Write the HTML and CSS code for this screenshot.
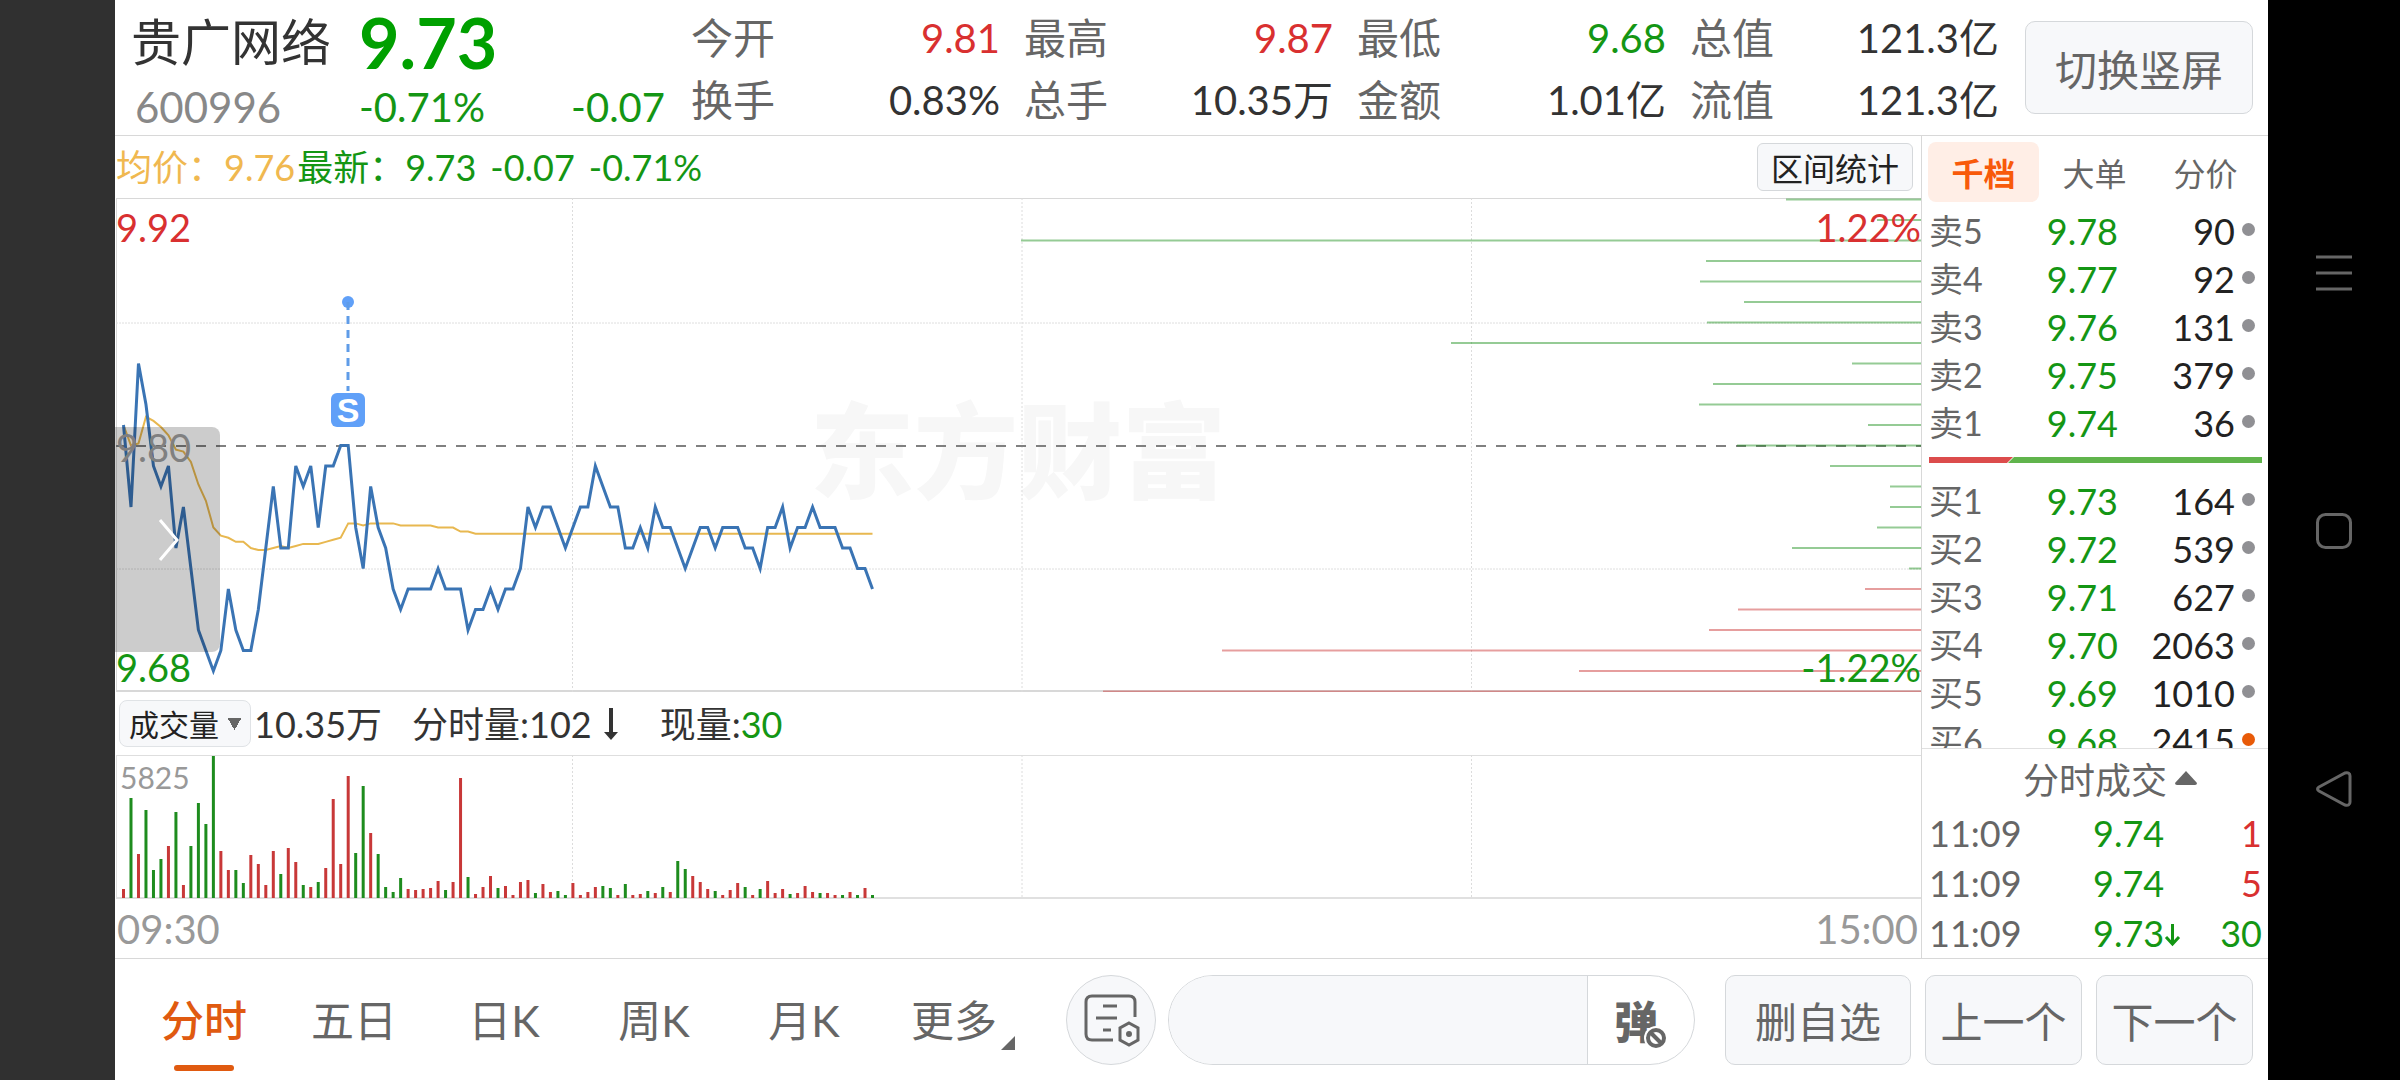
FILE: index.html
```html
<!DOCTYPE html>
<html lang="zh-CN">
<head>
    <meta charset="UTF-8">
    <meta name="viewport" content="width=device-width, initial-scale=1.0">
    <title>贵广网络 600996</title>
    <link rel="stylesheet" href="styles.css">
</head>
<body>
    <div class="device">
        <div class="notch"></div>
        <div class="screen">
            <header class="header">
                <div class="quote">
                    <h1 class="name">贵广网络</h1>
                    <div class="price down">9.73</div>
                    <div class="code">600996</div>
                    <div class="change down"><span>-0.71%</span><span>-0.07</span></div>
                </div>
                <dl class="stats">
                    <div><dt>今开</dt><dd class="up">9.81</dd></div>
                    <div><dt>最高</dt><dd class="up">9.87</dd></div>
                    <div><dt>最低</dt><dd class="down">9.68</dd></div>
                    <div><dt>总值</dt><dd>121.3亿</dd></div>
                    <div><dt>换手</dt><dd>0.83%</dd></div>
                    <div><dt>总手</dt><dd>10.35万</dd></div>
                    <div><dt>金额</dt><dd>1.01亿</dd></div>
                    <div><dt>流值</dt><dd>121.3亿</dd></div>
                </dl>
                <button class="btn rotate-btn">切换竖屏</button>
            </header>

            <main class="content">
                <section class="charts">
                    <div class="info-bar">
                        <span class="avg">均价：9.76</span>
                        <span class="down">最新：9.73</span>
                        <span class="down val">-0.07</span>
                        <span class="down val">-0.71%</span>
                        <button class="btn range-btn">区间统计</button>
                    </div>
                    <div class="price-chart">
                        <div class="watermark">东方财富</div>
                        <svg id="price-svg" viewBox="0 0 1805 494" preserveAspectRatio="none"></svg>
                        <button class="drawer" aria-label="展开">
                            <svg width="22" height="44" viewBox="0 0 22 44"><path d="M2 2 L19 22 L2 42" fill="none" stroke="#fff" stroke-width="3"/></svg>
                        </button>
                        <span class="label top-left up">9.92</span>
                        <span class="label mid-left">9.80</span>
                        <span class="label bottom-left down">9.68</span>
                        <span class="label top-right up">1.22%</span>
                        <span class="label bottom-right down">-1.22%</span>
                        <div class="trade-mark">
                            <svg width="14" height="98" viewBox="0 0 14 98">
                                <circle cx="7" cy="7" r="6" fill="#60a0f8"/>
                                <path d="M7 7 V96" stroke="#5f9ce8" stroke-width="3" stroke-dasharray="8 6"/>
                            </svg>
                            <span>S</span>
                        </div>
                    </div>
                    <div class="volume-bar">
                        <select class="indicator" aria-label="指标">
                            <option>成交量</option>
                        </select>
                        <span class="total">10.35万</span>
                        <span class="minute">分时量:102<svg width="14" height="34" viewBox="0 0 14 34"><path d="M5 1h4v24h5l-7 8-7-8h5z" fill="#333"/></svg></span>
                        <span>现量:<span class="down">30</span></span>
                    </div>
                    <div class="volume-chart">
                        <svg id="volume-svg" viewBox="0 0 1805 144" preserveAspectRatio="none"></svg>
                        <span class="max">5825</span>
                    </div>
                    <div class="time-axis"><span>09:30</span><span>15:00</span></div>
                </section>

                <aside class="side">
                    <div class="side-tabs">
                        <button class="active">千档</button>
                        <button>大单</button>
                        <button>分价</button>
                    </div>
                    <div class="book">
                        <table class="orders" id="sell-orders"></table>
                        <div class="ratio">
                            <svg viewBox="0 0 333 6" preserveAspectRatio="none"><path d="M0 0H84L78 6H0z" fill="#dc4c4c"/><path d="M85 0H333V6H79z" fill="#60b44c"/></svg>
                        </div>
                        <table class="orders" id="buy-orders"></table>
                    </div>
                    <button class="deals-title">分时成交<svg width="22" height="14" viewBox="0 0 22 14"><path d="M11 0 L22 12 Q22 14 20 14 H2 Q0 14 0 12 Z" fill="#666"/></svg></button>
                    <table class="deals">
                        <tr><td>11:09</td><td class="down">9.74</td><td class="up">1</td></tr>
                        <tr><td>11:09</td><td class="down">9.74</td><td class="up">5</td></tr>
                        <tr><td>11:09</td><td class="down">9.73<svg width="17" height="24" viewBox="0 0 17 24"><path d="M8.500 1V21M2 14l6.500 7 6.500-7" fill="none" stroke="#149614" stroke-width="3"/></svg></td><td class="down">30</td></tr>
                    </table>
                </aside>
            </main>

            <footer class="toolbar">
                <nav class="periods">
                    <button class="active">分时</button>
                    <button>五日</button>
                    <button>日K</button>
                    <button>周K</button>
                    <button>月K</button>
                    <button class="more">更多</button>
                </nav>
                <button class="note-btn" aria-label="笔记">
                    <svg width="56" height="54" viewBox="0 0 56 54" fill="none" stroke="#666" stroke-width="3">
                        <path d="M51 24V9Q51 3 45 3H8Q2 3 2 9V41Q2 47 8 47H29"/>
                        <path d="M19 13H33M12 25H33M19 37H27"/>
                        <path d="M45 30L54 35V47L45 52L36 47V35Z"/>
                        <circle cx="45" cy="41" r="2" fill="#666" stroke-width="2"/>
                    </svg>
                </button>
                <div class="danmu">
                    <input type="text" aria-label="弹幕">
                    <button aria-label="弹幕开关">
                        <span class="danmu-icon">弹<svg width="24" height="24" viewBox="0 0 24 24"><circle cx="12" cy="12" r="12" fill="#fff"/><circle cx="12" cy="12" r="8" fill="#fff" stroke="#666" stroke-width="4"/><path d="M6 6L18 18" stroke="#666" stroke-width="4"/></svg></span>
                    </button>
                </div>
                <div class="actions">
                    <button class="btn wide">删自选</button>
                    <button class="btn">上一个</button>
                    <button class="btn">下一个</button>
                </div>
            </footer>
        </div>
        <div class="sysnav">
            <button aria-label="菜单"><svg width="36" height="36" viewBox="0 0 36 36"><path d="M0 2H36M0 18H36M0 34H36" stroke="#666" stroke-width="3"/></svg></button>
            <button aria-label="主页"><svg width="36" height="36" viewBox="0 0 36 36"><rect x="1.500" y="1.500" width="33" height="33" rx="8" fill="none" stroke="#666" stroke-width="3"/></svg></button>
            <button aria-label="返回"><svg width="36" height="36" viewBox="0 0 36 36"><path d="M3 16L29 2Q34 1 34 5V31Q34 35 29 34L3 20Q0 18 3 16Z" fill="none" stroke="#666" stroke-width="3"/></svg></button>
        </div>
    </div>
    <script src="script.js"></script>
</body>
</html>
```
FILE: styles.css
```css
* {
    box-sizing: border-box;
}
body {
    margin: 0;
    font-family: Lato, "Noto Sans CJK SC", sans-serif;
    font-size: 36px;
    color: #333;
    background-color: #000;
}
button, input, select {
    font-family: inherit;
    color: inherit;
    margin: 0;
    padding: 0;
    border: none;
    background: none;
}
table {
    border-collapse: collapse;
    table-layout: fixed;
    width: 100%;
}
td {
    padding: 0;
}
svg {
    display: block;
}
.up {
    color: #d93030;
}
.down {
    color: #149614;
}
.device {
    display: flex;
    height: 100vh;
}
.notch {
    width: 115px;
    background-color: #303030;
}
.screen {
    flex: 1;
    min-width: 0;
    display: flex;
    flex-direction: column;
    background-color: #fff;
}
.btn {
    background-color: #f7f8fa;
    border: 1px solid #d5d8db;
    border-radius: 10px;
    color: #666;
    font-size: 42px;
}

/* header */
.header {
    display: flex;
    height: 136px;
    border-bottom: 1px solid #d8d8d8;
}
.quote {
    display: grid;
    grid-template-columns: 228px 1fr;
    grid-template-rows: 84px 46px;
    align-items: center;
    width: 576px;
    padding: 0 26px 0 16px;
}
.name {
    margin: 0;
    font-size: 50px;
    font-weight: normal;
    line-height: 84px;
}
.price {
    font-size: 70px;
    font-weight: bold;
    line-height: 80px;
    color: #00a000;
}
.code {
    padding-left: 4px;
    font-size: 42px;
    line-height: 46px;
    color: #888;
}
.change {
    display: flex;
    justify-content: space-between;
    font-size: 40px;
    line-height: 46px;
}
.stats {
    flex: 1;
    display: grid;
    grid-template-columns: repeat(4, 1fr);
    grid-auto-rows: 62px;
    column-gap: 24px;
    margin: 0;
    padding-top: 7px;
    font-size: 40px;
    line-height: 62px;
}
.stats div {
    display: flex;
    justify-content: space-between;
}
.stats dt {
    font-size: 42px;
    color: #666;
}
.stats dd {
    margin: 0;
}
.rotate-btn {
    width: 228px;
    height: 93px;
    margin: 21px 15px 0 26px;
}

/* left column: charts */
.content {
    flex: 1;
    min-height: 0;
    display: flex;
    border-bottom: 1px solid #d8d8d8;
}
.charts {
    flex: 1;
    min-width: 0;
    display: flex;
    flex-direction: column;
}
.info-bar {
    display: flex;
    align-items: center;
    height: 62px;
    padding: 0 8px 0 1px;
    line-height: 62px;
}
.info-bar .avg {
    margin-right: 2px;
    color: #f0b850;
}
.info-bar .val {
    margin-left: 14px;
}
.range-btn {
    width: 156px;
    height: 48px;
    margin-left: auto;
    border-radius: 6px;
    font-size: 32px;
    color: #222;
}
.price-chart {
    position: relative;
    flex: 1;
    min-height: 0;
    padding-left: 1px;
}
#price-svg {
    position: relative;
    width: 100%;
    height: 100%;
}
#volume-svg {
    width: 100%;
    height: 100%;
}
.watermark {
    position: absolute;
    inset: 0;
    display: flex;
    align-items: center;
    justify-content: center;
    font-size: 104px;
    font-weight: 900;
    color: #f7f7f7;
}
.drawer {
    position: absolute;
    left: 0;
    top: 229px;
    width: 105px;
    height: 225px;
    padding-left: 43px;
    border-radius: 0 8px 8px 0;
    background-color: rgba(0, 0, 0, 0.2);
}
.label {
    position: absolute;
    font-size: 38px;
    line-height: 40px;
}
.top-left {
    left: 1px;
    top: 9px;
}
.mid-left {
    left: 1px;
    top: 229px;
    color: #808080;
}
.bottom-left {
    left: 1px;
    bottom: 5px;
}
.top-right {
    right: 0;
    top: 9px;
}
.bottom-right {
    right: 0;
    bottom: 5px;
}
.trade-mark {
    position: absolute;
    left: 216px;
    top: 97px;
    display: flex;
    flex-direction: column;
    align-items: center;
}
.trade-mark span {
    width: 34px;
    height: 34px;
    border-radius: 6px;
    background-color: #60a0f8;
    color: #fff;
    font-family: "Liberation Sans", sans-serif;
    font-size: 34px;
    font-weight: bold;
    line-height: 34px;
    text-align: center;
}
.volume-bar {
    display: flex;
    align-items: center;
    height: 63px;
    padding-left: 4px;
    line-height: 62px;
}
.indicator {
    appearance: none;
    width: 132px;
    height: 47px;
    padding-left: 9px;
    border: 1px solid #e0e3e6;
    border-radius: 8px;
    background: conic-gradient(from -30deg at 50% 100%, #666 60deg, transparent 0) no-repeat 107px 17px / 15px 12px, #f7f8fa;
    font-size: 30px;
    color: #222;
}
.total {
    margin: 0 30px 0 3px;
}
.minute {
    display: flex;
    align-items: center;
    gap: 12px;
    margin-right: 42px;
}
.volume-chart {
    position: relative;
    height: 144px;
    padding-left: 1px;
}
.max {
    position: absolute;
    left: 5px;
    top: 7px;
    font-size: 30px;
    line-height: 30px;
    color: #999;
}
.time-axis {
    display: flex;
    justify-content: space-between;
    height: 59px;
    padding: 0 3px 0 2px;
    font-size: 40px;
    line-height: 60px;
    color: #999;
}

/* right column: order book */
.side {
    display: flex;
    flex-direction: column;
    width: 347px;
    border-left: 1px solid #d8d8d8;
}
.side-tabs {
    display: flex;
    height: 71px;
    padding: 6px 7px 5px 6px;
}
.side-tabs button {
    flex: 1;
    border-radius: 8px;
    font-size: 32px;
    color: #666;
}
.side-tabs .active {
    background-color: #ffeee6;
    color: #f85a0a;
    font-weight: bold;
}
.book {
    flex: 1;
    min-height: 0;
    overflow: hidden;
    padding: 0 6px 0 7px;
}
.orders tr {
    height: 48px;
    line-height: 48px;
}
.orders th {
    width: 80px;
    padding: 0;
    font-size: 34px;
    font-weight: normal;
    text-align: left;
    color: #666;
}
.orders td {
    width: 109px;
    text-align: right;
}
.orders .qty {
    width: 117px;
    color: #222;
}
.orders .flag {
    width: 27px;
    padding: 0 7px 4px 7px;
}
.flag i {
    display: block;
    width: 13px;
    height: 13px;
    border-radius: 50%;
    background-color: #909094;
}
.flag .mine {
    background-color: #e85a08;
}
.ratio {
    padding: 10px 0 14px;
}
.ratio svg {
    width: 100%;
    height: 6px;
}
.deals-title {
    display: flex;
    align-items: center;
    justify-content: center;
    gap: 8px;
    height: 60px;
    padding: 0 0 2px 30px;
    border-top: 1px solid #e0e0e0;
    font-size: 36px;
    color: #666;
}
.deals {
    width: 333px;
    margin: 0 7px;
    color: #666;
}
.deals tr {
    height: 50px;
    line-height: 50px;
}
.deals td:nth-child(1) {
    width: 164px;
}
.deals td:nth-child(3) {
    width: 64px;
    text-align: right;
}
.deals svg {
    display: inline-block;
}

/* bottom toolbar */
.toolbar {
    display: flex;
    align-items: center;
    height: 121px;
    padding: 0 15px 0 14px;
}
.periods {
    display: flex;
    align-self: stretch;
}
.periods button {
    position: relative;
    width: 150px;
    padding-bottom: 3px;
    font-size: 43px;
    color: #666;
}
.periods .active {
    color: #e05a10;
    font-weight: 500;
}
.periods .active::after {
    content: "";
    position: absolute;
    left: 45px;
    bottom: 9px;
    width: 60px;
    height: 6px;
    border-radius: 3px;
    background-color: #e05a10;
}
.periods .more::after {
    content: "";
    position: absolute;
    right: 14px;
    bottom: 30px;
    border-left: 14px solid transparent;
    border-bottom: 14px solid #666;
}
.note-btn {
    display: flex;
    align-items: center;
    justify-content: center;
    width: 90px;
    height: 90px;
    margin-left: 37px;
    padding-left: 2px;
    border: 1px solid #d5d8db;
    border-radius: 50%;
    background-color: #f7f8fa;
}
.danmu {
    flex: 1;
    display: flex;
    height: 90px;
    margin: 0 30px 0 12px;
    border: 1px solid #d5d8db;
    border-radius: 45px;
    overflow: hidden;
}
.danmu input {
    flex: 1;
    min-width: 0;
    padding: 0 36px;
    background-color: #f7f8fa;
    font-size: 36px;
}
.danmu button {
    width: 107px;
    padding-right: 10px;
    border-left: 1px solid #d5d8db;
}
.danmu-icon {
    position: relative;
    font-size: 44px;
    font-weight: 900;
    color: #666;
}
.danmu-icon svg {
    position: absolute;
    right: -10px;
    bottom: -2px;
}
.actions {
    display: flex;
    gap: 14px;
}
.actions .btn {
    width: 157px;
    height: 90px;
}
.actions .wide {
    width: 186px;
}

/* system keys */
.sysnav {
    display: flex;
    flex-direction: column;
    align-items: center;
    justify-content: center;
    gap: 222px;
    width: 132px;
    padding-bottom: 18px;
}
```
FILE: script.js
```js
// price offsets from 9.80, one per minute, in 0.01
const prices = [
    1, -3, 4, 2, -1, -2, -1, -5, -3, -6, -9, -10, -11, -10, -7, -9, -10, -10, -8, -5,
    -2, -5, -5, -1, -2, -1, -4, -1, -1, 0, 0, -4, -6, -2, -4, -5, -7, -8, -7, -7,
    -7, -7, -6, -7, -7, -7, -9, -8, -8, -7, -8, -7, -7, -6, -3, -4, -3, -3, -4, -5,
    -4, -3, -3, -1, -2, -3, -3, -5, -5, -4, -5, -3, -4, -4, -5, -6, -5, -4, -4, -5,
    -4, -4, -4, -5, -5, -6, -4, -4, -3, -5, -4, -4, -3, -4, -4, -4, -5, -5, -6, -6, -7
];
// average price offsets, in 0.001
const averages = [
    10, 0, 1, 14, 12, 9, 5, -2, -3, -8, -19, -27, -40, -44, -45, -47, -47, -50, -51, -51,
    -50, -49, -50, -49, -48, -48, -48, -47, -46, -45, -38, -38, -39, -38, -38, -38, -38,
    -39, -39, -39, -39, -39, -40, -40, -40, -42, -42
];
while (averages.length < prices.length) averages.push(-43);

// order depth by price, from 9.92 down to 9.68
const depth = [
    135, 44, 900, 215, 221, 177, 214, 470, 69, 208, 222, 53, 184, 91, 31, 31, 44, 129, 12,
    56, 183, 212, 699, 342, 818
];
const volumes = ('r9 g100 r44 g88 g28 g39 r52 g86 r13 g52 g95 g74 g142 r47 r28 g28 g15 r43 r34 r13 ' +
    'r47 g24 r50 r36 g13 r11 g16 r30 r99 r34 r122 g45 g112 r65 g44 g11 g6 g20 r9 r8 ' +
    'r9 r10 r17 g8 r16 r120 g21 r4 r11 r22 g10 r12 r3 r16 r18 g5 r14 r6 g7 g3 ' +
    'r15 r3 r6 r11 g12 g10 r3 g14 r3 r4 g7 r5 g11 r6 g37 g29 r22 r16 r9 g7 ' +
    'r3 r8 r15 g11 r3 g9 r17 r5 r9 g4 r5 r12 r6 g5 r5 r3 g3 r6 g3 r10 g3').split(' ');

const STEP = 7.49;
const TICK = 20.5;
const x = i => 7.5 + i * STEP;
const y = offset => 247.5 - offset * TICK;
const line = (x1, y1, x2, y2, color, width, dash) =>
    `<line x1="${x1}" y1="${y1}" x2="${x2}" y2="${y2}" stroke="${color}" stroke-width="${width}" stroke-dasharray="${dash || 'none'}"/>`;
const poly = (points, color, width) =>
    `<polyline points="${points.join(' ')}" fill="none" stroke="${color}" stroke-width="${width}"/>`;

function drawPrice() {
    let out = line(0, 0.5, 1805, 0.5, '#d8d8d8', 1) + line(0, 493, 1805, 493, '#d8d8d8', 2) +
        line(0.5, 0, 0.5, 494, '#d8d8d8', 1);
    [125, 371].forEach(v => out += line(0, v, 1805, v, '#dedede', 1, '2 1'));
    [456.5, 906, 1355.5].forEach(v => out += line(v, 0, v, 494, '#dcdcdc', 1, '2 2'));
    out += line(0, 248, 1805, 248, '#808080', 2, '10 10');
    depth.forEach((w, i) => {
        const v = y(12 - i);
        out += line(1805 - w, v, 1805, v, i < 19 ? 'rgba(20,140,20,.45)' : 'rgba(200,40,40,.45)', 2);
    });
    out += poly(averages.map((v, i) => x(i) + ',' + y(v / 10)), '#e8b850', 2);
    out += poly(prices.map((v, i) => x(i) + ',' + y(v)), '#3a74b4', 3);
    document.getElementById('price-svg').innerHTML = out;
}

function drawVolume() {
    let out = line(0, 0.5, 1805, 0.5, '#dedede', 1) + line(0, 143, 1805, 143, '#e0e0e0', 2) +
        line(0.5, 0, 0.5, 144, '#dedede', 1);
    [456.5, 906, 1355.5].forEach(v => out += line(v, 0, v, 144, '#dcdcdc', 1, '2 2'));
    volumes.forEach((v, i) => {
        const h = Number(v.slice(1));
        out += `<rect x="${x(i) - 1.5}" y="${143 - h}" width="3" height="${h}" fill="${v[0] === 'r' ? '#c83838' : '#1e8c1e'}"/>`;
    });
    document.getElementById('volume-svg').innerHTML = out;
}

function fillOrders(id, rows) {
    document.getElementById(id).innerHTML = rows.map(([name, price, qty, mine]) =>
        `<tr><th scope="row">${name}</th><td class="down">${price}</td><td class="qty">${qty}</td><td class="flag"><i class="${mine ? 'mine' : ''}"></i></td></tr>`
    ).join('');
}

drawPrice();
drawVolume();
fillOrders('sell-orders', [
    ['卖5', '9.78', 90], ['卖4', '9.77', 92], ['卖3', '9.76', 131], ['卖2', '9.75', 379], ['卖1', '9.74', 36]
]);
fillOrders('buy-orders', [
    ['买1', '9.73', 164], ['买2', '9.72', 539], ['买3', '9.71', 627], ['买4', '9.70', 2063],
    ['买5', '9.69', 1010], ['买6', '9.68', 2415, true]
]);
```
